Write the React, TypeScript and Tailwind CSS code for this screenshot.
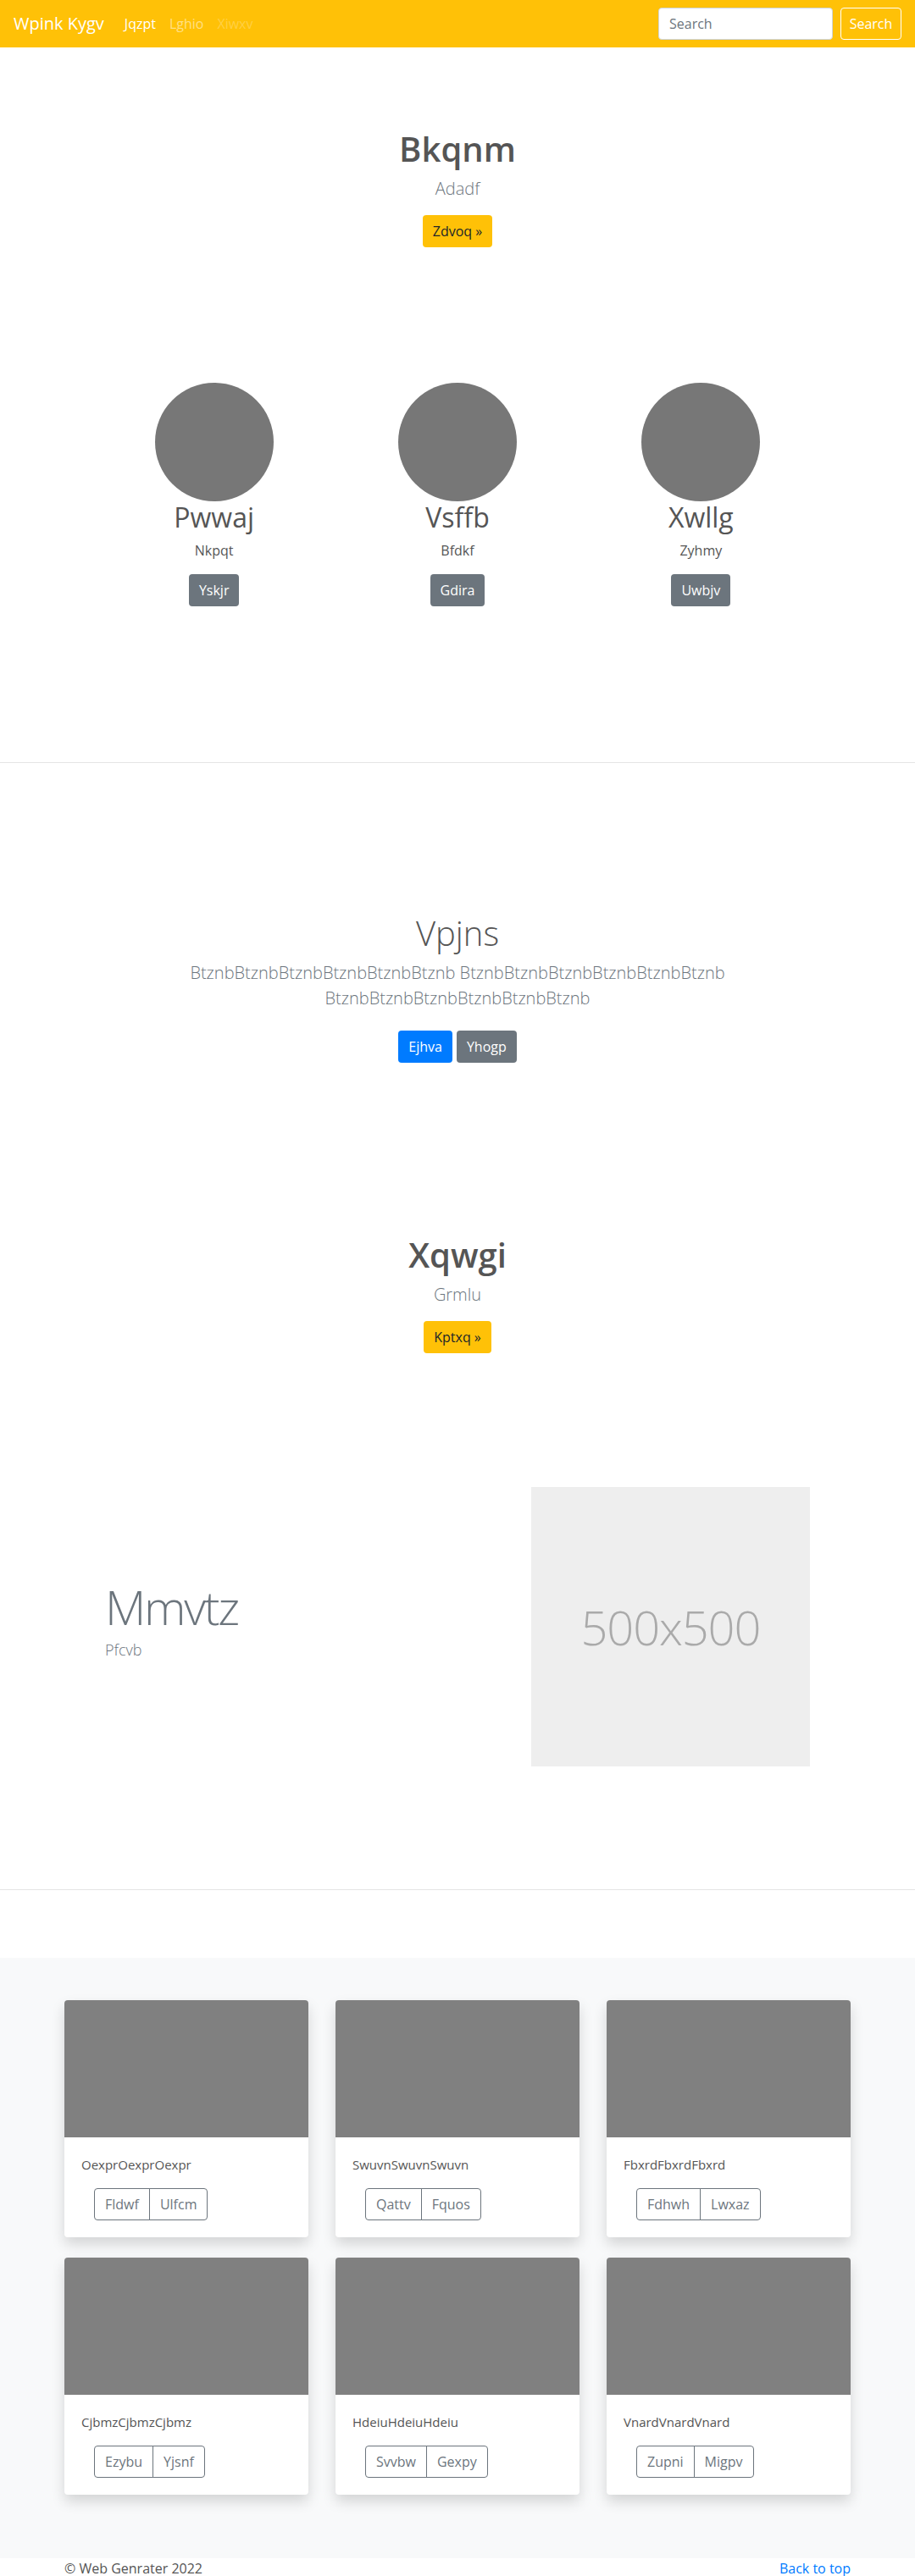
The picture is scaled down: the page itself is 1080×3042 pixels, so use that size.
import { ReactNode } from 'react'

type BtnProps = {
  children: ReactNode
  tone: 'warning' | 'secondary' | 'primary'
}

const tones = {
  warning: 'bg-[#ffc107] text-[#212529]',
  secondary: 'bg-[#6c757d] text-white',
  primary: 'bg-[#007bff] text-white',
}

function Btn({ children, tone }: BtnProps) {
  return (
    <button
      className={`inline-block h-[38px] rounded px-3 text-base leading-6 ${tones[tone]}`}
    >
      {children}
    </button>
  )
}

function Hero({ title, lead, action }: { title: string; lead: string; action: string }) {
  return (
    <div className="text-center">
      <h1 className="mb-2 text-[40px] font-semibold leading-[48px] text-[#555]">{title}</h1>
      <p className="mb-4 text-xl font-light leading-[30px] text-[#6c757d]">{lead}</p>
      <Btn tone="warning">{action} »</Btn>
    </div>
  )
}

const people = [
  { name: 'Pwwaj', sub: 'Nkpqt', btn: 'Yskjr' },
  { name: 'Vsffb', sub: 'Bfdkf', btn: 'Gdira' },
  { name: 'Xwllg', sub: 'Zyhmy', btn: 'Uwbjv' },
]

const cards = [
  { title: 'OexprOexprOexpr', a: 'Fldwf', b: 'Ulfcm' },
  { title: 'SwuvnSwuvnSwuvn', a: 'Qattv', b: 'Fquos' },
  { title: 'FbxrdFbxrdFbxrd', a: 'Fdhwh', b: 'Lwxaz' },
  { title: 'CjbmzCjbmzCjbmz', a: 'Ezybu', b: 'Yjsnf' },
  { title: 'HdeiuHdeiuHdeiu', a: 'Svvbw', b: 'Gexpy' },
  { title: 'VnardVnardVnard', a: 'Zupni', b: 'Migpv' },
]

function Card({ title, a, b }: { title: string; a: string; b: string }) {
  return (
    <div className="overflow-hidden rounded bg-white shadow-[0_8px_16px_rgba(0,0,0,0.15)]">
      <div className="h-[162px] bg-[#808080]" />
      <div className="p-5">
        <p className="mb-4 text-[15px] leading-6 text-[#555]">{title}</p>
        <div className="ml-[15px] inline-flex">
          <button className="h-[38px] rounded-l border border-[#6c757d] px-3 text-base leading-6 text-[#6c757d]">
            {a}
          </button>
          <button className="-ml-px h-[38px] rounded-r border border-[#6c757d] px-3 text-base leading-6 text-[#6c757d]">
            {b}
          </button>
        </div>
      </div>
    </div>
  )
}

export default function App() {
  return (
    <div className="bg-white font-['Open_Sans',sans-serif] text-[#212529]">
      <nav className="flex h-14 items-center bg-[#ffc107] px-4">
        <span className="mr-4 text-xl leading-[30px] text-white">Wpink Kygv</span>
        <ul className="flex">
          <li className="px-2 text-white">Jqzpt</li>
          <li className="px-2 text-white/50">Lghio</li>
          <li className="px-2 text-white/25">Xiwxv</li>
        </ul>
        <form className="ml-auto flex items-center">
          <input
            className="mr-[9px] h-[38px] w-[206px] rounded border border-[#ced4da] bg-white px-3 text-base text-[#495057] outline-none placeholder:text-[#6c757d]"
            placeholder="Search"
          />
          <button
            type="button"
            className="h-[38px] w-[72px] rounded border border-white text-base text-white"
          >
            Search
          </button>
        </form>
      </nav>

      <section className="pt-[96px]">
        <Hero title="Bkqnm" lead="Adadf" action="Zdvoq" />
      </section>

      <section className="mx-auto mt-[160px] grid w-[862px] grid-cols-3 text-center">
        {people.map((p) => (
          <div key={p.name} className="flex flex-col items-center">
            <div className="h-[140px] w-[140px] rounded-full bg-[#777]" />
            <h2 className="mb-2 text-[32px] leading-[38px] text-[#555]">{p.name}</h2>
            <p className="mb-4 leading-6 text-[#555]">{p.sub}</p>
            <Btn tone="secondary">{p.btn}</Btn>
          </div>
        ))}
      </section>

      <hr className="mt-[184px] border-t border-[#e5e5e5]" />

      <section className="mt-[177px] text-center">
        <h1 className="mb-2 text-[40px] font-light leading-[48px] text-[#555]">Vpjns</h1>
        <p className="mx-auto max-w-[720px] text-xl font-light leading-[30px] text-[#6c757d]">
          BtznbBtznbBtznbBtznbBtznbBtznb BtznbBtznbBtznbBtznbBtznbBtznb
          BtznbBtznbBtznbBtznbBtznbBtznb
        </p>
        <div className="mt-[23px] flex justify-center gap-[5px]">
          <Btn tone="primary">Ejhva</Btn>
          <Btn tone="secondary">Yhogp</Btn>
        </div>
      </section>

      <section className="mt-[203px]">
        <Hero title="Xqwgi" lead="Grmlu" action="Kptxq" />
      </section>

      <section className="mx-auto mt-[158px] flex w-[862px] items-center">
        <div className="w-7/12 px-[15px]">
          <h2 className="text-[56px] font-light leading-[1.2] tracking-[-0.04em] text-[#6c757d]">
            Mmvtz
          </h2>
          <p className="mb-4 mt-1 text-lg font-light leading-[27px] text-[#6c757d]">Pfcvb</p>
        </div>
        <div className="w-5/12 px-[15px]">
          <div className="flex h-[330px] w-full items-center justify-center bg-[#eee] text-[56px] font-light tracking-[-0.02em] text-[#aaa]">
            500x500
          </div>
        </div>
      </section>

      <hr className="mt-[145px] border-t border-[#e5e5e5]" />

      <section className="mt-[80px] bg-[#f8f9fa] pb-[75px] pt-[50px]">
        <div className="mx-auto grid w-[928px] grid-cols-3 gap-x-8 gap-y-6">
          {cards.map((c) => (
            <Card key={c.title} {...c} />
          ))}
        </div>
      </section>

      <footer className="mx-auto flex h-6 w-[928px] items-center justify-between leading-6">
        <span className="text-[#555]">© Web Genrater 2022</span>
        <a className="text-[#007bff]">Back to top</a>
      </footer>
    </div>
  )
}
